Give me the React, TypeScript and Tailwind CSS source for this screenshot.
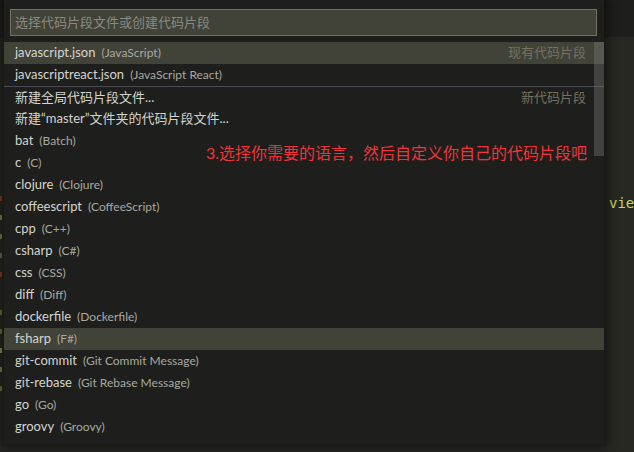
import React from "react";

type Row = { label: string; desc?: string; right?: string; sep?: boolean; hl?: boolean };

const rows: Row[] = [
  { label: "javascript.json", desc: "(JavaScript)", right: "现有代码片段", hl: true },
  { label: "javascriptreact.json", desc: "(JavaScript React)" },
  { label: "新建全局代码片段文件...", right: "新代码片段", sep: true },
  { label: "新建“master”文件夹的代码片段文件..." },
  { label: "bat", desc: "(Batch)" },
  { label: "c", desc: "(C)" },
  { label: "clojure", desc: "(Clojure)" },
  { label: "coffeescript", desc: "(CoffeeScript)" },
  { label: "cpp", desc: "(C++)" },
  { label: "csharp", desc: "(C#)" },
  { label: "css", desc: "(CSS)" },
  { label: "diff", desc: "(Diff)" },
  { label: "dockerfile", desc: "(Dockerfile)" },
  { label: "fsharp", desc: "(F#)", hl: true },
  { label: "git-commit", desc: "(Git Commit Message)" },
  { label: "git-rebase", desc: "(Git Rebase Message)" },
  { label: "go", desc: "(Go)" },
  { label: "groovy", desc: "(Groovy)" },
];

// small glimpses of the editor gutter showing at the left edge, one per editor line (19px)
const gutter: (string | null)[] = [
  null, null, null, null, null, null, null, null,
  "#8a3a2a", "#6f8a3a", "#6f8a3a", "#6e6d45", "#8a3a2a", null, "#5f7a35", "#5f7a35",
  "#9a8c45", "#7e7e45", "#5f7a35", null, null, null, "#a8963f", null,
];

export default function App() {
  const font = { fontFamily: '"Lato", "Noto Sans CJK SC", sans-serif' };
  return (
    <div className="relative w-[634px] h-[452px] overflow-hidden bg-[#272822] flex flex-col" style={font}>
      {/* editor background */}
      <div className="h-[37px] shrink-0 bg-[#1e1f1c]" />
      <div className="flex flex-1">
        <div className="w-[3px] flex flex-col pt-[0px]">
          {gutter.map((c, i) => (
            <div key={i} className="h-[19px] flex items-center">
              {c && <div className="w-[2px] h-[5px]" style={{ background: c }} />}
            </div>
          ))}
        </div>
        <div className="flex-1 flex justify-end items-start pt-[157px]">
          <div
            className="w-[25px] overflow-hidden text-[14px] leading-[18px] text-[#c9d45c]"
            style={{ fontFamily: '"DejaVu Sans Mono", monospace' }}
          >
            vie
          </div>
        </div>
      </div>

      {/* quick pick overlay */}
      <div className="absolute left-[4px] top-0 w-[600px] h-[444px] bg-[#1e1f1c] shadow-[0_0_10px_3px_rgba(0,0,0,0.55)]">
        <div className="pl-[6px] pr-[7px] pt-[9px] pb-[6px]">
          <div className="h-[27px] border border-[#75715e] bg-[#414339] flex items-center pl-[4px] text-[13px] text-[#8a8a80]">
            选择代码片段文件或创建代码片段
          </div>
        </div>
        <div className="relative">
          {rows.map((r, i) => (
            <div
              key={i}
              className={
                "h-[22px] flex items-center pl-[11px] pr-[18px] " +
                (r.hl ? "bg-[#414339] " : "") +
                (r.sep ? "border-t border-[#4a4a55] " : "")
              }
            >
              <span className="text-[13px] text-[#d4d4cf] whitespace-nowrap">{r.label}</span>
              {r.desc && (
                <span className="ml-[6px] text-[12px] text-[#a8a8a0] whitespace-nowrap">{r.desc}</span>
              )}
              <span className="flex-1" />
              {r.right && <span className="text-[13px] text-[#75715e]">{r.right}</span>}
            </div>
          ))}
          <div className="absolute right-0 top-0 w-[10px] h-[114px] bg-[rgba(121,121,121,0.4)]" />
        </div>
      </div>

      <div className="absolute left-[206px] top-[142px] text-[16px] leading-[22px] text-[#f0333a] whitespace-nowrap">
        3.选择你需要的语言，然后自定义你自己的代码片段吧
      </div>
    </div>
  );
}
